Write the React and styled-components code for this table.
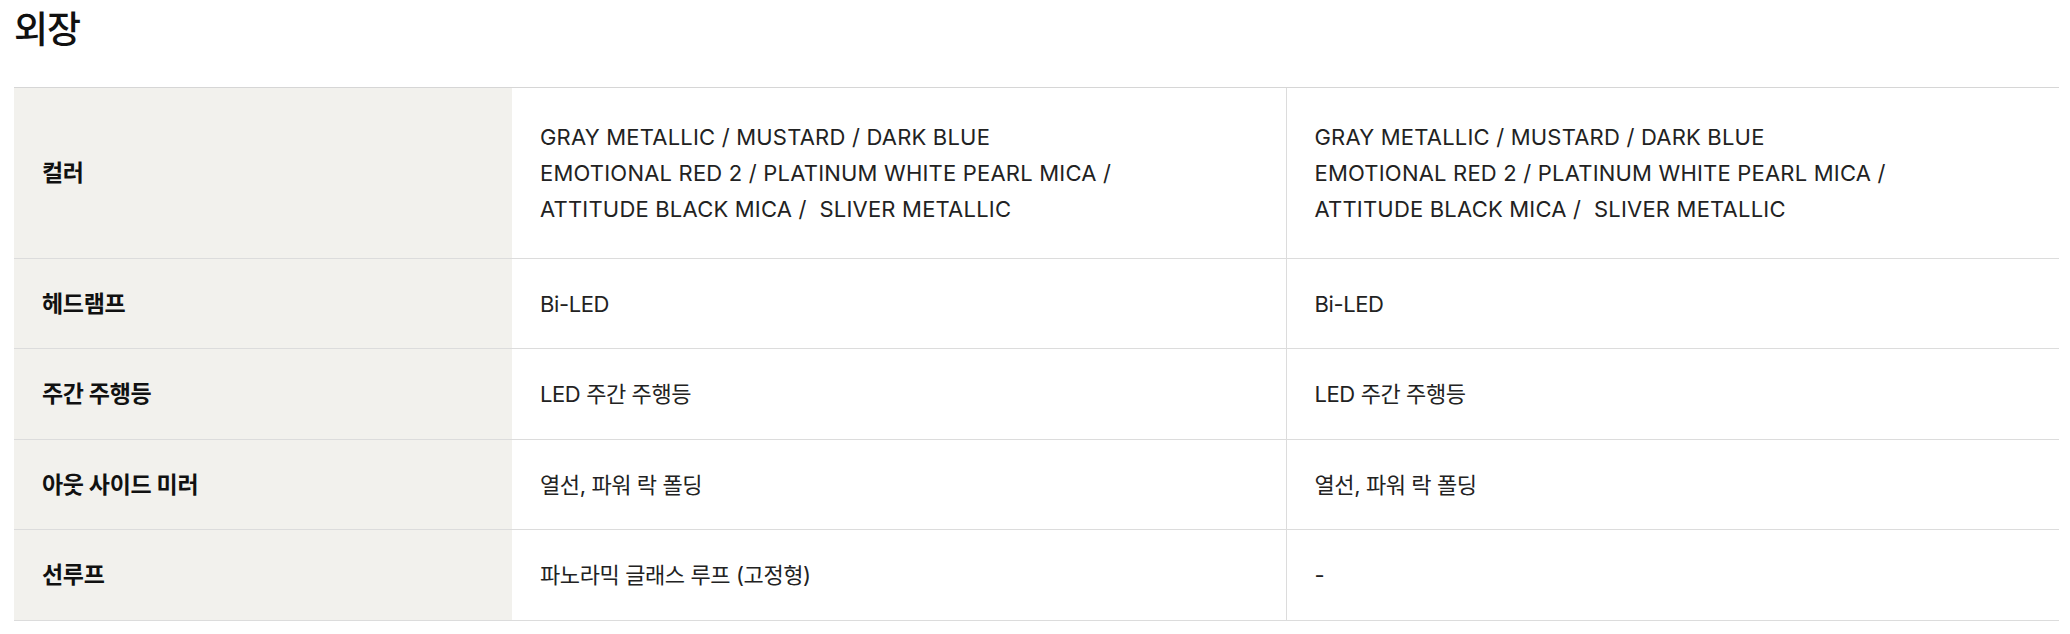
import React from 'react'
import styled, { createGlobalStyle } from 'styled-components';

const GlobalStyle = createGlobalStyle`
  body {
    margin: 0;
    background: #fff;
    font-family: Inter, "Noto Sans CJK KR", sans-serif;
    color: #222;
  }
`;

const rows = [
  {
    label: '컬러',
    values: [
      ['GRAY METALLIC / MUSTARD / DARK BLUE', 'EMOTIONAL RED 2 / PLATINUM WHITE PEARL MICA /', 'ATTITUDE BLACK MICA /  SLIVER METALLIC'],
      ['GRAY METALLIC / MUSTARD / DARK BLUE', 'EMOTIONAL RED 2 / PLATINUM WHITE PEARL MICA /', 'ATTITUDE BLACK MICA /  SLIVER METALLIC'],
    ],
  },
  { label: '헤드램프', values: [['Bi-LED'], ['Bi-LED']] },
  { label: '주간 주행등', values: [['LED 주간 주행등'], ['LED 주간 주행등']] },
  { label: '아웃 사이드 미러', values: [['열선, 파워 락 폴딩'], ['열선, 파워 락 폴딩']] },
  { label: '선루프', values: [['파노라믹 글래스 루프 (고정형)'], ['-']] },
];

const Spec = () => (
  <Section>
    <GlobalStyle />
    <Title>외장</Title>
    <Table>
      {rows.map((row) => (
        <Row key={row.label}>
          <Label>{row.label}</Label>
          {row.values.map((lines, i) => (
            <Value key={i} divided={i > 0}>
              <Lines multi={lines.length > 1}>
                {lines.map((line, j) => (
                  <Line key={j}>{line}</Line>
                ))}
              </Lines>
            </Value>
          ))}
        </Row>
      ))}
    </Table>
  </Section>
);

const Section = styled.section`
  padding: 6px 0 0 14px;
  width: 2045px;
`;

const Title = styled.h2`
  margin: 0 0 33px 0;
  font-size: 37px;
  font-weight: 500;
  line-height: 48px;
  color: #111;
  letter-spacing: -1px;
`;

const Table = styled.div`
  border-top: 1px solid #d6d6d6;
`;

const Row = styled.div`
  display: grid;
  grid-template-columns: 498px 1fr 1fr;
  border-bottom: 1px solid #dcdcdc;
`;

const Label = styled.div`
  display: flex;
  align-items: center;
  padding: 27px 28px 26.5px;
  background: #f2f1ed;
  font-size: 23px;
  font-weight: 700;
  line-height: 36px;
  color: #111;
  letter-spacing: -0.3px;
`;

const Value = styled.div`
  display: flex;
  align-items: center;
  padding: 27px 28px 26.5px;
  border-left: ${(p) => (p.divided ? '1px solid #dcdcdc' : 'none')};
  font-size: 22px;
  line-height: 36px;
  color: #222;
  letter-spacing: -0.4px;
`;

const Lines = styled.div`
  padding: ${(p) => (p.multi ? '4px 0' : '0')};
  letter-spacing: ${(p) => (p.multi ? '0.2px' : 'inherit')};
`;

const Line = styled.div`
  white-space: pre;
`;

export default Spec
